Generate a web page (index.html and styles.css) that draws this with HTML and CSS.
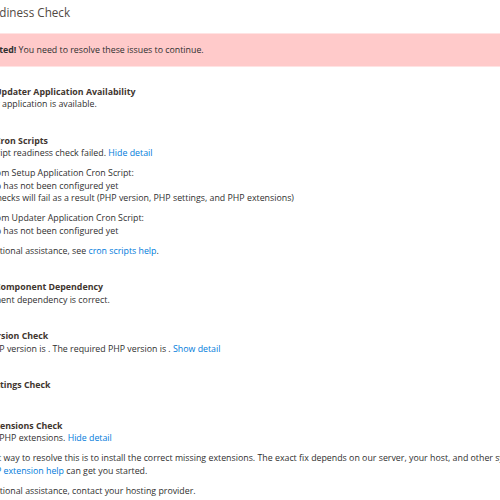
FILE: index.html
```html
<!DOCTYPE html>
<html lang="en">
<head>
<meta charset="utf-8">
<title>Readiness Check</title>
<link rel="stylesheet" href="styles.css">
</head>
<body>
<main class="page">
  <h1 class="page-title">Readiness Check</h1>
  <div class="message-error"><strong>Completed!</strong> You need to resolve these issues to continue.</div>
  <div class="checks">
    <section class="check">
      <h3 class="check-title">Check Updater Application Availability</h3>
      <p>Updater application is available.</p>
    </section>
    <section class="check">
      <h3 class="check-title">Check Cron Scripts</h3>
      <p>Cron script readiness check failed. <a href="#">Hide detail</a></p>
      <div class="detail">
        <p>Error from Setup Application Cron Script:<br>Cron job has not been configured yet<br>Other checks will fail as a result (PHP version, PHP settings, and PHP extensions)</p>
        <p>Error from Updater Application Cron Script:<br>Cron job has not been configured yet</p>
        <p>For additional assistance, see <a href="#">cron scripts help</a>.</p>
      </div>
    </section>
    <section class="check">
      <h3 class="check-title">Check Component Dependency</h3>
      <p>Component dependency is correct.</p>
    </section>
    <section class="check">
      <h3 class="check-title">PHP Version Check</h3>
      <p>Your PHP version is . The required PHP version is . <a href="#">Show detail</a></p>
    </section>
    <section class="check">
      <h3 class="check-title">PHP Settings Check</h3>
      <div class="check-empty"></div>
    </section>
    <section class="check">
      <h3 class="check-title">PHP Extensions Check</h3>
      <p>Missing PHP extensions. <a href="#">Hide detail</a></p>
      <div class="detail">
        <p>The best way to resolve this is to install the correct missing extensions. The exact fix depends on our server, your host, and other system variables.<br>Our <a href="#">PHP extension help</a> can get you started.</p>
        <p>For additional assistance, contact your hosting provider.</p>
      </div>
    </section>
  </div>
</main>
</body>
</html>
```
FILE: styles.css
```css
html, body {
  margin: 0;
  padding: 0;
  overflow: hidden;
  background: #ffffff;
}

body {
  font-family: "Open Sans", "DejaVu Sans", sans-serif;
  font-size: 8.82px;
  line-height: 12.5px;
  color: #303030;
}

.page {
  width: 1000px;
  margin-left: -34px;
}

.page-title {
  font-size: 11.7px;
  font-weight: 400;
  line-height: 16px;
  margin: 3.5px 0 13.5px 13px;
  color: #514943;
}

.message-error {
  background: #ffcaca;
  border-top: 1px solid #ffe3e3;
  border-bottom: 1px solid #ffe3e3;
  padding: 10px 0 9.5px;
  color: #303030;
}

.message-error strong {
  font-weight: 700;
}

.checks {
  display: flex;
  flex-direction: column;
  gap: 24px;
  margin-top: 18.5px;
}

.check-title {
  font-size: 8.82px;
  font-weight: 700;
  line-height: 12.5px;
  margin: 0;
  color: #41362f;
}

p {
  margin: 0;
}

.detail {
  display: flex;
  flex-direction: column;
  gap: 7.5px;
  margin-top: 7.5px;
}

.check-empty {
  height: 4px;
}

a {
  color: #007bdb;
  text-decoration: none;
}
```
